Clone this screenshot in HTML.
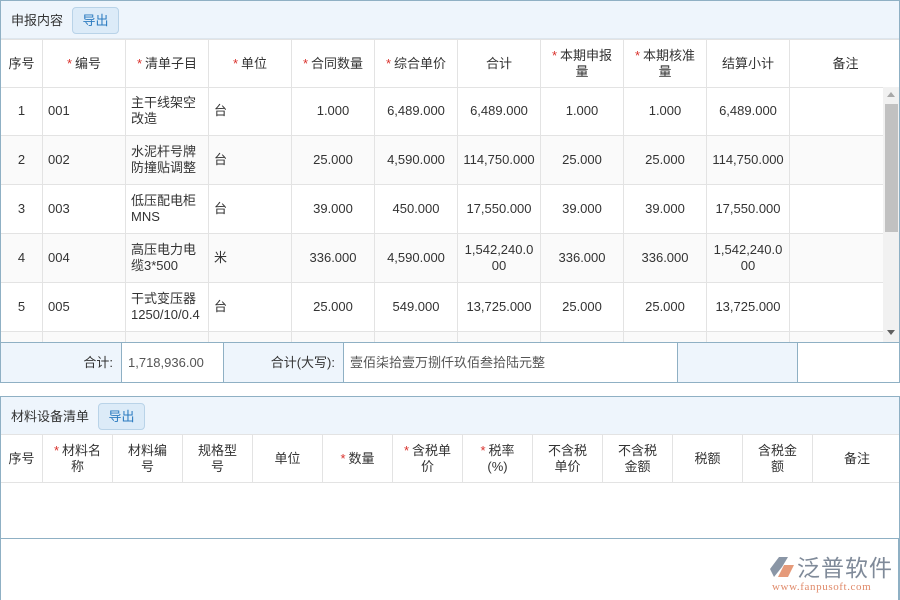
<!DOCTYPE html>
<html><head><meta charset="utf-8">
<style>
*{box-sizing:border-box;margin:0;padding:0}
body{width:900px;height:600px;background:#fff;position:relative;overflow:hidden;font-family:"Liberation Sans","Noto Sans CJK SC",sans-serif;font-size:13px;color:#333}
.abs{position:absolute}
.panel{position:absolute;border:1px solid #8fb0c4}
.hd{position:absolute;left:0;right:0;top:0;height:38px;background:#eef5fc;border-bottom:1px solid #dde6ee}
.title{position:absolute;left:10px;top:9px;font-size:13px;color:#333}
.btn{position:absolute;top:6px;width:47px;height:27px;border:1px solid #b9d3e8;border-radius:4px;background:#dcebf8;color:#2b7bc0;text-align:center;line-height:25px;font-size:13px}
table{border-collapse:collapse;table-layout:fixed;position:absolute}
td{border:1px solid #e3e3e3;text-align:center;vertical-align:middle;line-height:16px;padding:0 4px;overflow:hidden;white-space:normal;word-break:normal;overflow-wrap:anywhere}
tr.h td{padding:0 10px}
tr.h td:first-child{padding:0}
.s{color:#d9302b;margin-right:3px}
.l{text-align:left;padding-left:5px}
tr.ev td{background:#fafafa}
.fc{position:absolute;top:0;height:39px;line-height:39px;border-right:1px solid #8fb0c4}
</style></head><body>

<div class="panel" style="left:0;top:0;width:900px;height:383px;overflow:hidden">
 <div class="hd"><span class="title">申报内容</span><div class="btn" style="left:71px">导出</div></div>
 <table style="left:-1px;top:38px;width:901px">
  <colgroup><col style="width:42px"><col style="width:83px"><col style="width:83px"><col style="width:83px"><col style="width:83px"><col style="width:83px"><col style="width:83px"><col style="width:83px"><col style="width:83px"><col style="width:83px"><col style="width:112px"></colgroup>
  <tr class="h" style="height:48px"><td>序号</td><td><span class="s">*</span>编号</td><td><span class="s">*</span>清单子目</td><td><span class="s">*</span>单位</td><td><span class="s">*</span>合同数量</td><td><span class="s">*</span>综合单价</td><td>合计</td><td><span class="s">*</span>本期申报量</td><td><span class="s">*</span>本期核准量</td><td>结算小计</td><td>备注</td></tr>
 </table>
 <div class="abs" style="left:0;top:86px;width:882px;height:255px;overflow:hidden">
 <table style="left:-1px;top:-1px;width:884px">
  <colgroup><col style="width:42px"><col style="width:83px"><col style="width:83px"><col style="width:83px"><col style="width:83px"><col style="width:83px"><col style="width:83px"><col style="width:83px"><col style="width:83px"><col style="width:83px"><col style="width:95px"></colgroup>
  <tr style="height:49px"><td>1</td><td class="l">001</td><td class="l">主干线架空改造</td><td class="l">台</td><td>1.000</td><td>6,489.000</td><td>6,489.000</td><td>1.000</td><td>1.000</td><td>6,489.000</td><td></td></tr>
  <tr class="ev" style="height:49px"><td>2</td><td class="l">002</td><td class="l">水泥杆号牌防撞贴调整</td><td class="l">台</td><td>25.000</td><td>4,590.000</td><td>114,750.000</td><td>25.000</td><td>25.000</td><td>114,750.000</td><td></td></tr>
  <tr style="height:49px"><td>3</td><td class="l">003</td><td class="l">低压配电柜MNS</td><td class="l">台</td><td>39.000</td><td>450.000</td><td>17,550.000</td><td>39.000</td><td>39.000</td><td>17,550.000</td><td></td></tr>
  <tr class="ev" style="height:49px"><td>4</td><td class="l">004</td><td class="l">高压电力电缆3*500</td><td class="l">米</td><td>336.000</td><td>4,590.000</td><td>1,542,240.000</td><td>336.000</td><td>336.000</td><td>1,542,240.000</td><td></td></tr>
  <tr style="height:49px"><td>5</td><td class="l">005</td><td class="l">干式变压器 1250/10/0.4</td><td class="l">台</td><td>25.000</td><td>549.000</td><td>13,725.000</td><td>25.000</td><td>25.000</td><td>13,725.000</td><td></td></tr>
  <tr class="ev" style="height:49px"><td>6</td><td class="l">006</td><td class="l">开关柜更换</td><td class="l">台</td><td></td><td></td><td></td><td></td><td></td><td></td><td></td></tr>
 </table>
 </div>
 <div class="abs" style="left:882px;top:86px;width:17px;height:255px;background:#f1f1f1">
  <div class="abs" style="left:4px;top:5px;width:0;height:0;border-left:4px solid transparent;border-right:4px solid transparent;border-bottom:5px solid #a8a8a8"></div>
  <div class="abs" style="left:2px;top:17px;width:13px;height:128px;background:#c1c1c1"></div>
  <div class="abs" style="left:4px;top:243px;width:0;height:0;border-left:4px solid transparent;border-right:4px solid transparent;border-top:5px solid #606060"></div>
 </div>
 <div class="abs" style="left:0;top:341px;width:898px;height:41px;border-top:1px solid #8fb0c4">
  <div class="fc" style="left:0;width:121px;background:#eef5fc;text-align:right;padding-right:8px">合计:</div>
  <div class="fc" style="left:121px;width:102px;padding-left:6px;color:#555">1,718,936.00</div>
  <div class="fc" style="left:223px;width:120px;background:#eef5fc;text-align:right;padding-right:8px">合计(大写):</div>
  <div class="fc" style="left:343px;width:334px;padding-left:6px;color:#555">壹佰柒拾壹万捌仟玖佰叁拾陆元整</div>
  <div class="fc" style="left:677px;width:120px;background:#eef5fc"></div>
 </div>
</div>

<div class="panel" style="left:0;top:396px;width:900px;height:143px;overflow:hidden">
 <div class="hd" style="height:38px"><span class="title">材料设备清单</span><div class="btn" style="left:97px">导出</div></div>
 <table style="left:-1px;top:37px;width:901px">
  <colgroup><col style="width:42px"><col style="width:70px"><col style="width:70px"><col style="width:70px"><col style="width:70px"><col style="width:70px"><col style="width:70px"><col style="width:70px"><col style="width:70px"><col style="width:70px"><col style="width:70px"><col style="width:70px"><col style="width:89px"></colgroup>
  <tr class="h" style="height:48px"><td>序号</td><td><span class="s">*</span>材料名称</td><td>材料编号</td><td>规格型号</td><td>单位</td><td><span class="s">*</span>数量</td><td><span class="s">*</span>含税单价</td><td><span class="s">*</span>税率(%)</td><td>不含税单价</td><td>不含税金额</td><td>税额</td><td>含税金额</td><td>备注</td></tr>
 </table>
</div>
<div class="abs" style="left:0;top:538px;width:1px;height:62px;background:#8fb0c4"></div>
<div class="abs" style="left:898px;top:538px;width:2px;height:62px;background:#8fb0c4"></div>

<svg class="abs" style="left:770px;top:555px" width="26" height="24" viewBox="0 0 26 24">
 <path d="M9 2 L18 2 L12 12 L4 22 L0 14 Z" fill="#8a96a6"/>
 <path d="M14 10 L24 10 L18 22 L8 22 Z" fill="#e59a7a"/>
</svg>
<div class="abs" style="left:797px;top:552px;font-size:23px;color:#7f8a99;font-family:'Noto Sans CJK SC',sans-serif;line-height:28px;letter-spacing:1px">泛普软件</div>
<div class="abs" style="left:772px;top:581px;font-size:11px;color:#e08a6a;font-family:'Liberation Serif',serif;letter-spacing:0.6px">www.fanpusoft.com</div>
</body></html>
